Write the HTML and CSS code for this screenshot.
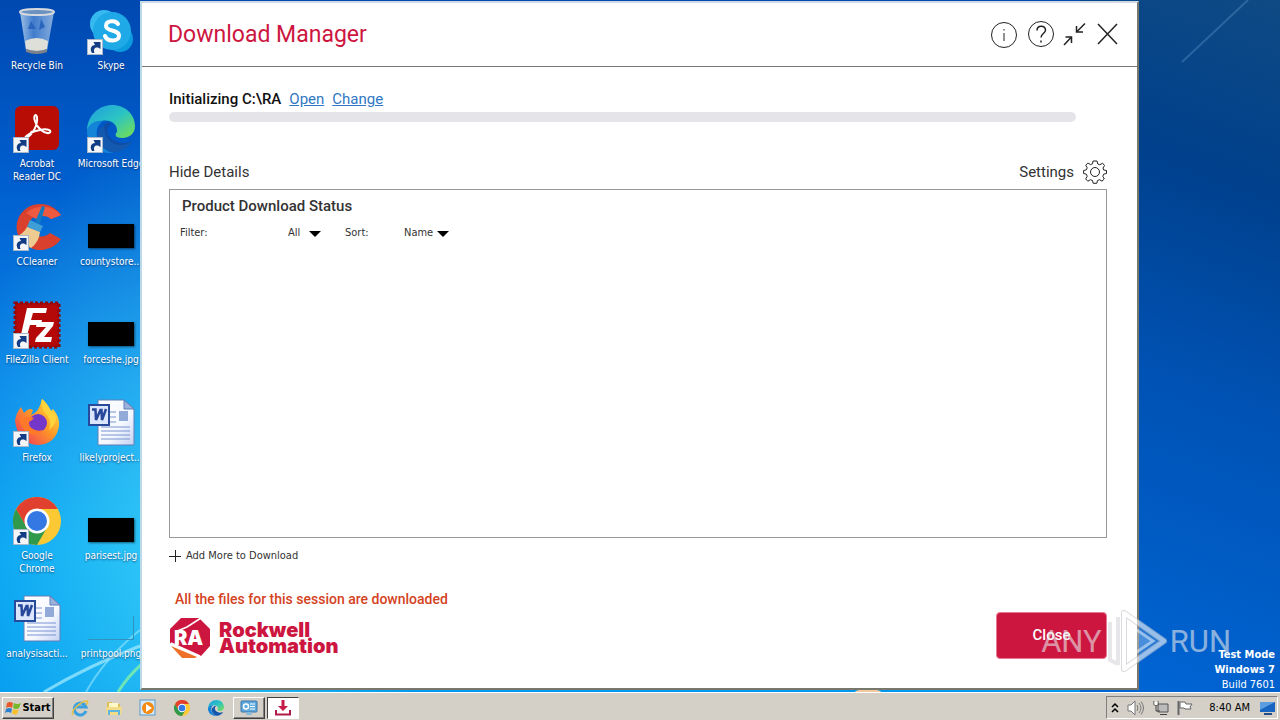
FILE: index.html
```html
<!DOCTYPE html>
<html lang="en">
<head>
    <meta charset="UTF-8">
    <meta name="viewport" content="width=device-width, initial-scale=1.0">
    <title>Download Manager</title>
    <link rel="stylesheet" href="styles.css">
</head>
<body>
    <!-- shared icon shapes -->
    <svg class="sprite" aria-hidden="true">
        <defs>
            <linearGradient id="edgeGreen" x1="0" y1="0" x2="1" y2="1">
                <stop offset="0" stop-color="#1f9de0"/><stop offset=".5" stop-color="#2bc4c4"/><stop offset="1" stop-color="#7be04b"/>
            </linearGradient>
            <linearGradient id="foxFire" x1="1" y1="0" x2="0" y2="1">
                <stop offset="0" stop-color="#fff04a"/><stop offset=".45" stop-color="#ff9a26"/><stop offset="1" stop-color="#ee2a62"/>
            </linearGradient>
            <linearGradient id="binGlass" x1="0" y1="0" x2="1" y2="0">
                <stop offset="0" stop-color="#b9d3ee"/><stop offset=".4" stop-color="#4c84d0"/><stop offset="1" stop-color="#9dbde4"/>
            </linearGradient>
            <linearGradient id="paper" x1="0" y1="0" x2="1" y2="1">
                <stop offset="0" stop-color="#fff"/><stop offset=".6" stop-color="#f4f7ff"/><stop offset="1" stop-color="#c3d1f1"/>
            </linearGradient>
        </defs>
        <symbol id="shortcut" viewBox="0 0 16 16">
            <rect x=".5" y=".5" width="15" height="15" fill="#f3f5f8" stroke="#a9b8c8"/>
            <path d="M5 14C2 9 5 6 8 6L6.500 3 13.500 3 13.500 10 11 8.500C8 8 6 10 7.500 14Z" fill="#123c83"/>
        </symbol>
        <symbol id="chrome" viewBox="0 0 48 48">
            <circle cx="24" cy="24" r="24" fill="#fcc934"/>
            <path d="M24 24 13.600 30 3.200 12A24 24 0 0 0 24 48L34.400 30Z" fill="#30994b"/>
            <path d="M24 24V12H44.800A24 24 0 0 0 3.200 12L13.600 30Z" fill="#e2402f"/>
            <circle cx="24" cy="24" r="12.500" fill="#fff"/>
            <circle cx="24" cy="24" r="10" fill="#3478e4"/>
        </symbol>
        <symbol id="edge" viewBox="0 0 48 48">
            <path d="M0 25C1 9 13 0 25 0C39 0 48 10 48 21C48 29 42 33 35 33C29 33 27 30 30 27C31 19 23 14 15 16C7 17 2 21 0 25Z" fill="url(#edgeGreen)"/>
            <path d="M0 25C3 18 9 15 16 16C10 20 8 28 11 35C14 43 21 47 27 48C11 50-1 38 0 25Z" fill="#1384d8"/>
            <path d="M20 18C11 24 14 38 24 42C32 45 40 42 45 36C38 40 26 38 22 31C19 26 20 22 24 19C23 18 21 17 20 18Z" fill="#0f4da4"/>
            <path d="M11 33C14 43 22 48 29 47C37 46 43 41 45 36C36 43 18 42 17 21C11 24 10 29 11 33Z" fill="#1459b0"/>
        </symbol>
        <symbol id="word" viewBox="0 0 48 48">
            <path d="M11 1H37L47 10V46H11Z" fill="url(#paper)" stroke="#5f7fb8"/>
            <path d="M37 1V10H47Z" fill="#9cb2dd" stroke="#5f7fb8"/>
            <path d="M23 13H29M23 18H29M23 23H29M14 28H43M14 32H43M14 36H43M14 40H43" stroke="#7b94cf"/>
            <path d="M32 12H41V22H32Z" fill="#92aad8"/>
            <rect x="2" y="6" width="20" height="20" fill="#dbe5fb" stroke="#274a9b" stroke-width="2"/>
            <path d="M5 10.500H8.500L9 21 13.500 11H14.500L15 21 19 10" fill="none" stroke="#27479b" stroke-width="2.500"/>
        </symbol>
    </svg>

    <div class="screen">
        <main class="desktop">
            <svg class="wallpaper" viewBox="0 0 1280 692" preserveAspectRatio="none" aria-hidden="true">
                <path d="M44 692Q88 666 140 646" stroke="#a8ecff" stroke-width="3" fill="none" opacity=".7"/>
                <path d="M86 692Q105 658 140 630" stroke="#9ae6ff" stroke-width="2" fill="none" opacity=".6"/>
                <path d="M118 692Q128 676 142 664" stroke="#7ff0a8" stroke-width="3" fill="none" opacity=".8"/>
                <path d="M1182 62 1248 0" stroke="#5d92c8" stroke-width="2" opacity=".4"/>
                <ellipse cx="868" cy="692" rx="13" ry="3" fill="#f0c9a0"/>
            </svg>

            <ul class="shortcuts">
                <li class="shortcut">
                    <svg class="shortcut-icon" viewBox="0 0 48 48">
                        <path d="M7 5 13 44Q24 49 34 44L41 5Z" fill="url(#binGlass)" opacity=".85"/>
                        <path d="M12 34Q24 28 35 34L34 42Q24 46 13 42Z" fill="#dedfd9"/>
                        <path d="M13 42Q24 46 34 42V45Q24 49 13 45Z" fill="#7d8289"/>
                        <path d="M18 14 23 22H15ZM28 12 32 20 26 23Z" fill="#2965bd"/>
                        <ellipse cx="24" cy="5" rx="17" ry="3" fill="#6a91c0" stroke="#d6dade" stroke-width="2"/>
                    </svg>
                    <span>Recycle Bin</span>
                </li>
                <li class="shortcut">
                    <svg class="shortcut-icon" viewBox="0 0 48 48">
                        <circle cx="17" cy="17" r="14" fill="#36b9ee"/><circle cx="33" cy="32" r="13" fill="#0d9bdf"/><circle cx="25" cy="24" r="19" fill="#1faae7"/>
                        <path d="M31 17C29 13 19 13 19 19C19 25 32 22 32 29C32 35 20 35 18 29" fill="none" stroke="#fff" stroke-width="4" stroke-linecap="round"/>
                        <use href="#shortcut" x="0" y="32" width="16" height="16"/>
                    </svg>
                    <span>Skype</span>
                </li>
                <li class="shortcut">
                    <svg class="shortcut-icon" viewBox="0 0 48 48">
                        <rect x="2" y="1" width="44" height="44" rx="6" fill="#b70d05"/>
                        <path d="M13 34C20 29 25 20 24 12C23 8 20 11 22 16C24 23 31 29 36 28C40 26 35 23 27 25C20 26 11 31 12 34C13 35 16 31 19 26" fill="none" stroke="#fff" stroke-width="2"/>
                        <use href="#shortcut" x="0" y="32" width="16" height="16"/>
                    </svg>
                    <span>Acrobat<br>Reader DC</span>
                </li>
                <li class="shortcut">
                    <svg class="shortcut-icon" viewBox="0 0 48 48">
                        <use href="#edge"/><use href="#shortcut" x="0" y="32" width="16" height="16"/>
                    </svg>
                    <span>Microsoft Edge</span>
                </li>
                <li class="shortcut">
                    <svg class="shortcut-icon" viewBox="0 0 48 48">
                        <path d="M48 12A24 23 0 1 0 48 36L37 30A12 11 0 1 1 38 16Z" fill="#d9402d"/>
                        <path d="M48 12A24 23 0 0 0 13 10L23 16Q31 10 38 16Z" fill="#ee5a3f"/>
                        <path d="M29 3 32 4 27 21 22 19Z" fill="#1678be"/>
                        <path d="M17 17 30 23 27 29 14 24Z" fill="#3d9fd6"/>
                        <path d="M14 24 27 29Q26 39 18 45L3 34Q11 30 14 24Z" fill="#eecb91"/>
                        <use href="#shortcut" x="0" y="32" width="16" height="16"/>
                    </svg>
                    <span>CCleaner</span>
                </li>
                <li class="shortcut">
                    <div class="thumb thumb-black"></div>
                    <span>countystore...</span>
                </li>
                <li class="shortcut">
                    <svg class="shortcut-icon" viewBox="0 0 48 48">
                        <rect x="2" y="2" width="44" height="44" fill="#b50808" stroke="#8e0909" stroke-width="3" stroke-dasharray="3 2"/>
                        <path d="M14 7H34L33 12H20L18 19H29L28 24H17L13 38H7Z" fill="#fff"/>
                        <path d="M24 21H41L40 25 31 36H39L38 41H22L23 37 33 26H23Z" fill="#fff"/>
                        <use href="#shortcut" x="0" y="32" width="16" height="16"/>
                    </svg>
                    <span>FileZilla Client</span>
                </li>
                <li class="shortcut">
                    <div class="thumb thumb-black"></div>
                    <span>forceshe.jpg</span>
                </li>
                <li class="shortcut">
                    <svg class="shortcut-icon" viewBox="0 0 48 48">
                        <path d="M2 22Q3 14 8 8L11 14Q16 8 20 11L18 16Q26 14 29 0Q34 4 38 12L40 10Q47 18 46 27Q43 45 25 46Q5 45 2 22Z" fill="url(#foxFire)"/>
                        <circle cx="25" cy="24" r="9" fill="#7537c9"/>
                        <path d="M6 20Q13 16 21 19Q18 23 14 23Q19 34 30 31Q24 38 15 34Q8 29 6 20Z" fill="#ff7a28"/>
                        <path d="M29 0Q27 9 34 16Q39 22 36 31Q49 20 38 12Q34 4 29 0Z" fill="#ffd33a"/>
                        <use href="#shortcut" x="0" y="32" width="16" height="16"/>
                    </svg>
                    <span>Firefox</span>
                </li>
                <li class="shortcut">
                    <svg class="shortcut-icon" viewBox="0 0 48 48"><use href="#word"/></svg>
                    <span>likelyproject...</span>
                </li>
                <li class="shortcut">
                    <svg class="shortcut-icon" viewBox="0 0 48 48">
                        <use href="#chrome"/><use href="#shortcut" x="0" y="32" width="16" height="16"/>
                    </svg>
                    <span>Google<br>Chrome</span>
                </li>
                <li class="shortcut">
                    <div class="thumb thumb-black"></div>
                    <span>parisest.jpg</span>
                </li>
                <li class="shortcut">
                    <svg class="shortcut-icon" viewBox="0 0 48 48"><use href="#word"/></svg>
                    <span>analysisacti...</span>
                </li>
                <li class="shortcut">
                    <div class="thumb thumb-clear"></div>
                    <span>printpool.png</span>
                </li>
            </ul>

            <div class="build-info">
                <strong>Test Mode</strong>
                <strong>Windows 7</strong>
                <span>Build 7601</span>
            </div>

            <section class="window">
                <header class="window-header">
                    <h1>Download Manager</h1>
                    <div class="window-actions">
                        <button class="icon-button round" type="button" aria-label="About">
                            <svg width="30" height="30" viewBox="0 0 30 30"><circle cx="13" cy="15" r="12.500"/><path d="M13 13V21M13 9V10.500"/></svg>
                        </button>
                        <button class="icon-button round" type="button" aria-label="Help">
                            <svg width="30" height="30" viewBox="0 0 30 30"><circle cx="15" cy="14" r="12.500"/><path d="M11 10.500C11 5 19.500 5 19.500 10C19.500 13.500 15 13.500 15 17.500M15 20.500V22.500" stroke-width="1.500"/></svg>
                        </button>
                        <button class="icon-button" type="button" aria-label="Minimize">
                            <svg width="28" height="28" viewBox="0 0 28 28"><path d="M3 24 10 16.500M4.500 16H10.500V22M24 2.500 16 10.500M15.500 5V11H22" stroke-width="1.500"/></svg>
                        </button>
                        <button class="icon-button" type="button" aria-label="Close window">
                            <svg width="28" height="28" viewBox="0 0 28 28"><path d="M4 3 23 23M23 3 4 23" stroke-width="1.500"/></svg>
                        </button>
                    </div>
                </header>

                <div class="window-body">
                    <div class="status">
                        <strong>Initializing C:\RA</strong>
                        <a href="#">Open</a>
                        <a href="#">Change</a>
                    </div>
                    <div class="progress" role="progressbar" aria-label="Download progress" aria-valuenow="0"></div>

                    <div class="details-bar">
                        <button class="text-button" type="button">Hide Details</button>
                        <button class="text-button" type="button">
                            Settings
                            <svg width="24" height="24" viewBox="0 0 24 24"><path d="M10 1H14L14.800 4 16.800 4.800 19.500 3.200 21.500 5.500 20 8 20.600 10 23.500 10.500V13.500L20.600 14.200 19.800 16.300 21.300 19 19 21.200 16.500 19.700 14.500 20.500 13.800 23.300H10.200L9.500 20.500 7.500 19.700 4.800 21.200 2.700 19 4.200 16.300 3.400 14.200 .6 13.500V10.500L3.400 9.800 4.200 7.800 2.700 5.200 4.900 3 7.500 4.600 9.500 3.800Z"/><circle cx="12" cy="12" r="4.500"/></svg>
                        </button>
                    </div>

                    <div class="products">
                        <h2>Product Download Status</h2>
                        <div class="filters">
                            <label for="filter">Filter:</label>
                            <div class="picker picker-wide">
                                <select id="filter"><option>All</option></select>
                                <svg width="12" height="7" viewBox="0 0 12 7"><path d="M0 1H12L6 7Z"/></svg>
                            </div>
                            <label for="sort">Sort:</label>
                            <div class="picker">
                                <select id="sort"><option>Name</option></select>
                                <svg width="12" height="7" viewBox="0 0 12 7"><path d="M0 1H12L6 7Z"/></svg>
                            </div>
                        </div>
                    </div>

                    <button class="add-more" type="button">
                        <svg width="12" height="12" viewBox="0 0 12 12"><path d="M6.500 0V12M0 6.500H12"/></svg>
                        Add More to Download
                    </button>

                    <p class="message">All the files for this session are downloaded</p>

                    <footer class="window-footer">
                        <div class="brand">
                            <svg width="42" height="42" viewBox="0 0 42 42">
                                <path d="M12 1H30L41 12V29L32 39 1 26V12Z" fill="#cd163f"/>
                                <path d="M2 29 28 40 26 41H13Z" fill="#ee7129"/>
                                <path d="M32 1 18 10 6 15M2 26 31 39" fill="none" stroke="#fff" stroke-width="1.500"/>
                                <text x="5" y="28" class="brand-mark">RA</text>
                            </svg>
                            <div class="brand-name">Rockwell<br>Automation</div>
                        </div>
                        <button class="close-button" type="button">Close</button>
                    </footer>
                </div>
            </section>
        </main>

        <footer class="taskbar">
            <button class="task start" type="button">
                <svg width="16" height="16" viewBox="0 0 16 16"><path d="M2 3Q5 1 8 3L7 8Q4 6 1 8Z" fill="#e85a2a"/><path d="M9 3Q12 5 16 3L14 8Q11 10 8 8Z" fill="#76b82a"/><path d="M1 9Q4 7 7 9L6 13Q3 11 0 13Z" fill="#2b80d0"/><path d="M8 9Q11 11 14 9L12 14Q9 16 7 13Z" fill="#f8c12c"/></svg>
                Start
            </button>
            <div class="quick-launch">
                <button class="task" type="button" aria-label="Internet Explorer">
                    <svg width="18" height="18" viewBox="0 0 18 18"><path d="M15 12A6 6 0 1 1 15 8H5" fill="none" stroke="#3ba0df" stroke-width="3"/><path d="M2 16C-1 12 10 2 16 2C18 3 15 6 15 6" fill="none" stroke="#e9bf42" stroke-width="1.500"/></svg>
                </button>
                <button class="task" type="button" aria-label="Explorer">
                    <svg width="18" height="18" viewBox="0 0 18 18"><path d="M2 3H7L8 5H15V15H2Z" fill="#e0bf58"/><path d="M4 4H13V9H4Z" fill="#fff8c9"/><path d="M1 8H17L16 16H2Z" fill="#f2dc88"/><path d="M4 16V12H14V16" fill="none" stroke="#5eb5e0" stroke-width="2"/></svg>
                </button>
                <button class="task" type="button" aria-label="Media Player">
                    <svg width="18" height="18" viewBox="0 0 18 18"><rect x="1" y="1" width="15" height="15" fill="#d5e9f7" stroke="#5a9acb"/><circle cx="9" cy="9" r="6" fill="#f28a13"/><path d="M7 5V13L13 9Z" fill="#fff"/></svg>
                </button>
                <button class="task" type="button" aria-label="Chrome"><svg width="16" height="16"><use href="#chrome"/></svg></button>
                <button class="task" type="button" aria-label="Edge"><svg width="16" height="16"><use href="#edge"/></svg></button>
            </div>
            <div class="open-tasks">
                <button class="task raised" type="button" aria-label="Control panel">
                    <svg width="18" height="16" viewBox="0 0 18 16"><rect x="1" y="1" width="16" height="11" rx="1" fill="#5fa8dc" stroke="#3876ab"/><circle cx="6" cy="6.500" r="2.500" fill="none" stroke="#fff" stroke-width="1.500"/><path d="M10 4H15M10 6.500H15M10 9H15" stroke="#fff"/><path d="M6 15H12L11 12H7Z" fill="#86b8d8"/></svg>
                </button>
                <button class="task pressed" type="button" aria-label="Download Manager">
                    <svg width="18" height="18" viewBox="0 0 18 18"><path d="M2 11V15.500H16V11" fill="none" stroke="#b01c48" stroke-width="2"/><path d="M7.500 1H10.500V7H14L9 12 4 7H7.500Z" fill="#c81c48"/></svg>
                </button>
            </div>
            <div class="tray">
                <svg width="8" height="12" viewBox="0 0 8 12"><path d="M1 5 4 2 7 5M1 10 4 7 7 10" fill="none" stroke="#000" stroke-width="1.500"/></svg>
                <svg width="18" height="16" viewBox="0 0 18 16"><path d="M1 5H4L8 1V15L4 11H1Z" fill="#fff" stroke="#777"/><path d="M10 5Q12 8 10 11M12 3Q16 8 12 13M14 1.500Q19 8 14 14.500" fill="none" stroke="#777"/></svg>
                <svg width="16" height="16" viewBox="0 0 16 16"><path d="M5 4H15V12H5Z" fill="#bbb" stroke="#555"/><path d="M7 14.500H14M1 1V5H5V1M3 5V11H7" fill="none" stroke="#444"/><path d="M1.500 1.500H4.500V5H1.500Z" fill="#fff"/></svg>
                <svg width="16" height="16" viewBox="0 0 16 16"><path d="M1.500 1V15" stroke="#666" stroke-width="2"/><path d="M3 2H8L9 4H15L13 7 14 9H8L7 8H3Z" fill="#fff" stroke="#666"/></svg>
                <time>8:40 AM</time>
                <svg width="16" height="14" viewBox="0 0 16 14"><path d="M0 1H15V11H0Z" fill="#1765c0"/><path d="M0 1H15L0 9Z" fill="#5c9de0"/><path d="M4 13H12" stroke="#234d86" stroke-width="2"/></svg>
            </div>
        </footer>

        <div class="watermark">
            <span>ANY</span>
            <svg width="64" height="66" viewBox="0 0 64 66">
                <path d="M6 14V52L14 56M14 9V57" fill="none" stroke="#d8d8dc" stroke-width="4"/>
                <path d="M20 5V61L60 33Z" fill="#fff" fill-opacity=".25" stroke="#c4c4ca" stroke-width="6" stroke-linejoin="round"/>
                <path d="M20 5V61L60 33Z" fill="none" stroke="#fff" stroke-width="4" stroke-linejoin="round"/>
                <path d="M27 18V48L49 33Z" fill="#fff" fill-opacity=".3" stroke="#fff" stroke-width="3"/>
            </svg>
            <span>RUN</span>
        </div>
    </div>
</body>
</html>
```

FILE: styles.css
```css
* {
    box-sizing: border-box;
}

body {
    margin: 0;
    font-family: Roboto, "Liberation Sans", sans-serif;
    color: #333;
}

button {
    font-family: inherit;
    color: inherit;
    background: none;
    border: none;
    padding: 0;
    cursor: pointer;
}

svg {
    display: block;
    flex: none;
}

.sprite {
    position: absolute;
    width: 0;
    height: 0;
}

.screen {
    position: relative;
    display: flex;
    flex-direction: column;
    height: 100vh;
    overflow: hidden;
}

/* desktop */
.desktop {
    position: relative;
    flex: 1;
    min-height: 0;
    background:
        linear-gradient(20deg, #0066d6, #0052b4 45%, #00408c 75%, #0f4a84) right / 200px 100% no-repeat,
        radial-gradient(ellipse 240px 420px at 190px 540px, rgba(70, 220, 250, 0.75), rgba(0, 170, 245, 0) 100%),
        linear-gradient(180deg, #0048b0 0%, #0060d0 28%, #0a86e8 55%, #04a0f2 80%, #0098ee 100%);
}

.wallpaper {
    position: absolute;
    inset: 0;
    width: 100%;
    height: 100%;
}

.shortcuts {
    position: relative;
    display: grid;
    grid-template-columns: 74px 74px;
    grid-auto-rows: 98px;
    width: 148px;
    margin: 0;
    padding: 7px 0 0;
    list-style: none;
}

.shortcut {
    display: flex;
    flex-direction: column;
    align-items: center;
    gap: 4px;
    color: #fff;
    font-family: "DejaVu Sans Condensed", "DejaVu Sans", sans-serif;
    font-size: 10px;
    line-height: 13px;
    text-align: center;
    text-shadow: 0 1px 2px rgba(0, 30, 80, 0.7);
    white-space: nowrap;
}

.shortcut-icon {
    width: 48px;
    height: 48px;
}

.thumb {
    width: 46px;
    height: 24px;
    margin: 21px 0 3px;
}

.thumb-black {
    background: #000;
    box-shadow: 1px 1px 2px rgba(0, 0, 0, 0.5);
}

.thumb-clear {
    border-right: 1px solid #2f93bd;
    border-bottom: 1px solid #2f93bd;
}

.build-info {
    position: absolute;
    right: 5px;
    bottom: 0;
    display: flex;
    flex-direction: column;
    align-items: flex-end;
    color: #fff;
    font-family: "DejaVu Sans Condensed", "DejaVu Sans", sans-serif;
    font-size: 11px;
    line-height: 15px;
}

/* download manager window */
.window {
    position: absolute;
    inset: 1px 141px 2px 140px;
    display: flex;
    flex-direction: column;
    background: #fff;
    border: 2px solid;
    border-color: #cdd9e6 #77776b #77776b #bcd9ea;
}

.window-header {
    display: flex;
    justify-content: space-between;
    align-items: center;
    height: 64px;
    padding: 0 15px 0 26px;
    border-bottom: 1px solid #777;
}

h1 {
    margin: 0;
    color: #cd163f;
    font-size: 23px;
    font-weight: 400;
}

.window-actions {
    display: flex;
    align-items: center;
    gap: 5px;
}

.icon-button {
    width: 28px;
    height: 30px;
}

.icon-button.round {
    width: 30px;
}

.icon-button svg,
.text-button svg,
.add-more svg {
    fill: none;
    stroke: #222;
}

.window-body {
    display: flex;
    flex: 1;
    flex-direction: column;
    padding: 22px 30px 29px 27px;
}

.status {
    display: flex;
    gap: 8px;
    font-size: 15px;
    line-height: 20px;
}

.status strong {
    color: #111;
    font-weight: 500;
}

.status a {
    color: #2f78c4;
}

.progress {
    height: 10px;
    margin: 3px 31px 0 0;
    background: #e5e4e8;
    border-radius: 5px;
}

.details-bar {
    display: flex;
    justify-content: space-between;
    margin-top: 38px;
}

.text-button {
    display: flex;
    align-items: center;
    gap: 9px;
    font-size: 15px;
    line-height: 24px;
}

.products {
    flex: 1;
    margin-top: 5px;
    padding: 5px 10px;
    border: 1px solid #999;
}

h2 {
    margin: 0 2px;
    font-size: 15px;
    font-weight: 500;
    line-height: 22px;
}

.filters {
    display: flex;
    align-items: center;
    gap: 24px;
    margin-top: 8px;
    font-family: "DejaVu Sans Condensed", "DejaVu Sans", sans-serif;
    font-size: 11px;
    line-height: 16px;
}

.filters label {
    min-width: 28px;
}

.picker {
    display: flex;
    align-items: center;
    justify-content: flex-end;
    gap: 3px;
    width: 52px;
}

.picker-wide {
    gap: 8px;
    width: 89px;
}

select {
    appearance: none;
    padding: 0;
    border: none;
    background: none;
    color: inherit;
    font: inherit;
}

.add-more {
    display: flex;
    align-items: center;
    align-self: flex-start;
    gap: 5px;
    margin-top: 10px;
    font-family: "DejaVu Sans Condensed", "DejaVu Sans", sans-serif;
    font-size: 11px;
    line-height: 16px;
}

.message {
    margin: 25px 0 0 6px;
    color: #d4421e;
    font-size: 14px;
    font-weight: 500;
    line-height: 20px;
}

.window-footer {
    display: flex;
    justify-content: space-between;
    align-items: center;
    margin-top: 2px;
}

.brand {
    display: flex;
    align-items: center;
    gap: 8px;
    padding-top: 6px;
}

.brand-mark {
    fill: #fff;
    font-family: Inter, Roboto, sans-serif;
    font-size: 20px;
    font-weight: 900;
}

.brand-name {
    color: #cd163f;
    font-family: Inter, Roboto, sans-serif;
    font-size: 20px;
    font-weight: 900;
    line-height: 16px;
}

.close-button {
    width: 111px;
    height: 47px;
    background: #cd163f;
    border: 1px solid #ea7a94;
    border-radius: 4px;
    color: #fff;
    font-size: 15px;
    font-weight: 500;
}

/* taskbar */
.taskbar {
    display: flex;
    align-items: center;
    height: 28px;
    padding: 2px 2px 0;
    background: #d4d0c8;
    border-top: 1px solid #fff;
    font-family: "DejaVu Sans Condensed", "DejaVu Sans", sans-serif;
    font-size: 11px;
}

.task {
    display: flex;
    align-items: center;
    justify-content: center;
    width: 34px;
    height: 22px;
}

.start,
.raised {
    border: 1px solid;
    border-color: #fff #404040 #404040 #fff;
    box-shadow: inset -1px -1px #808080;
}

.start {
    gap: 1px;
    width: 52px;
    color: #000;
    font-size: 11px;
    font-weight: bold;
}

.quick-launch {
    display: flex;
    margin-left: 9px;
}

.open-tasks {
    display: flex;
    gap: 2px;
}

.raised,
.pressed {
    width: 32px;
}

.pressed {
    background: #fff;
    border: 1px solid;
    border-color: #404040 #fff #fff #404040;
}

.tray {
    display: flex;
    align-items: center;
    gap: 8px;
    height: 23px;
    margin-left: auto;
    padding: 0 1px 0 4px;
    border: 1px solid;
    border-color: #808080 #fff #fff #808080;
    color: #000;
}

.tray time {
    margin: 0 2px 0 8px;
}

/* recording overlay */
.watermark {
    position: absolute;
    right: 49px;
    bottom: 46px;
    display: flex;
    align-items: center;
    gap: 2px;
    color: #e6e6ea;
    font-family: Roboto, sans-serif;
    font-size: 31px;
    font-weight: 400;
    opacity: 0.6;
    pointer-events: none;
}
```
